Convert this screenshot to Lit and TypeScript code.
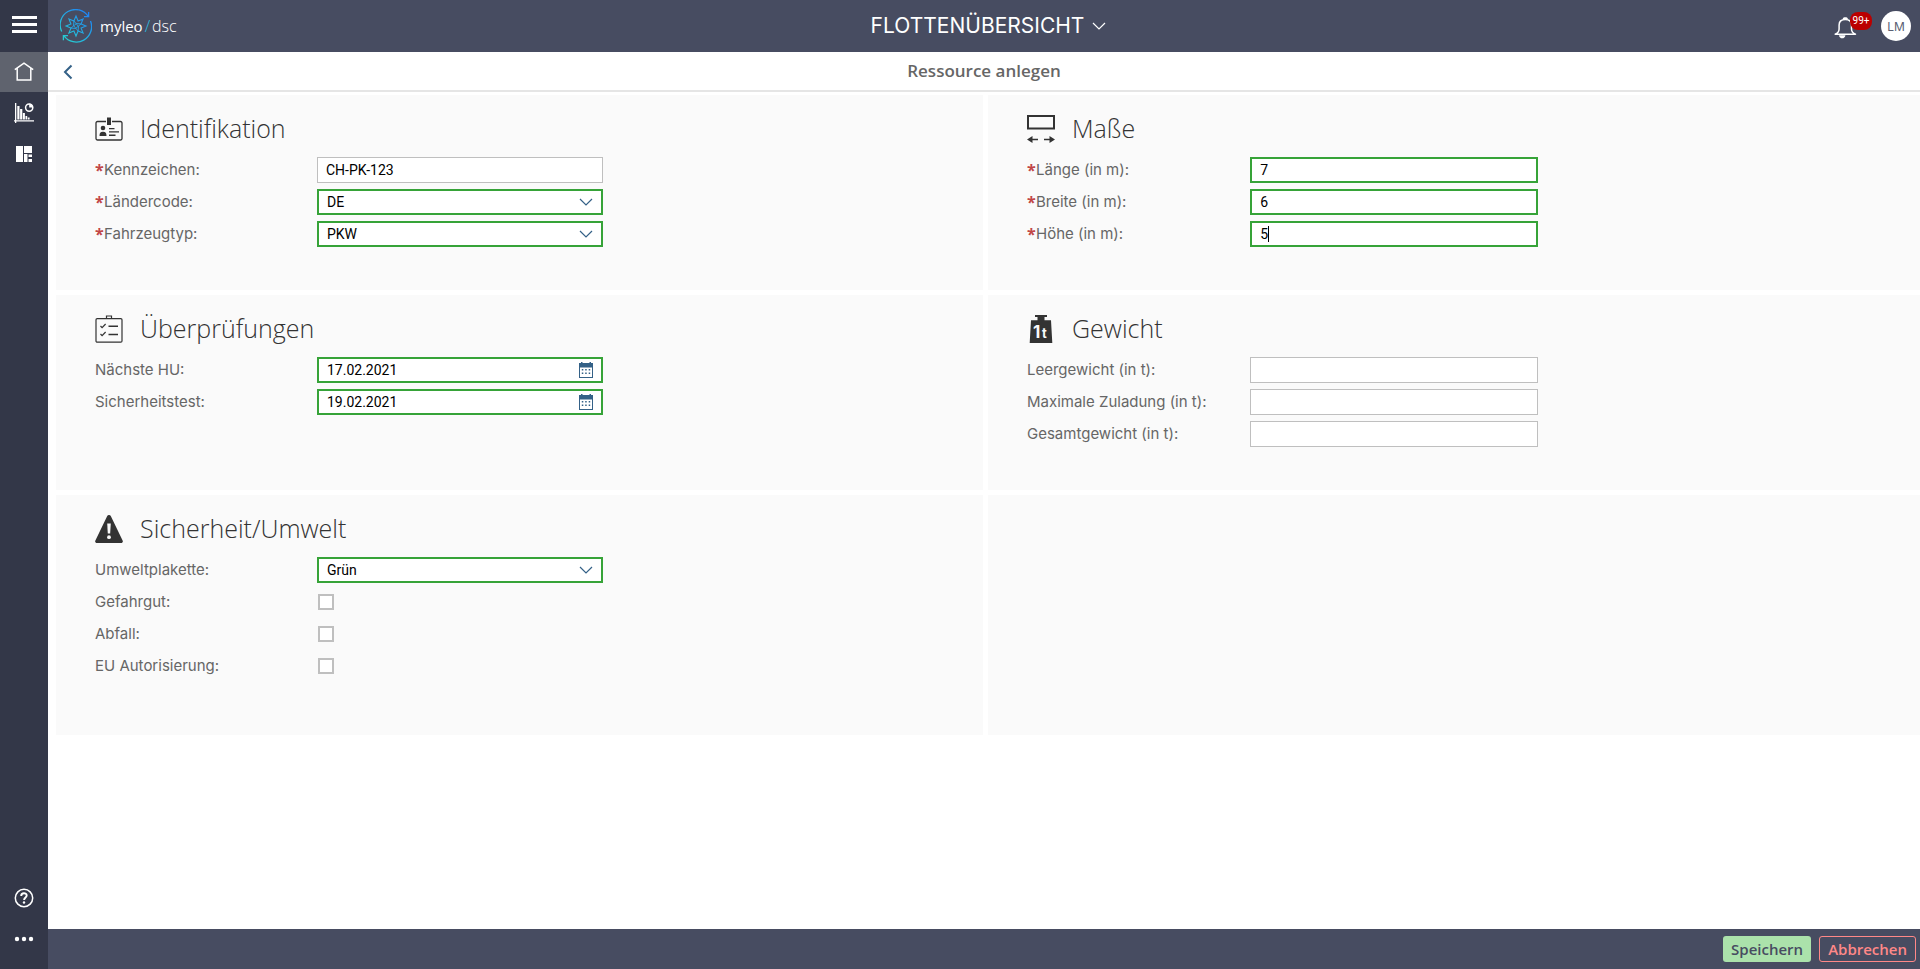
import { LitElement, html, svg, css, nothing, TemplateResult } from "lit";
import { customElement } from "lit/decorators.js";
import { classMap } from "lit/directives/class-map.js";

type Kind = "text" | "select" | "date" | "check";

interface Field {
  id: string;
  label: string;
  kind: Kind;
  value?: string;
  options?: string[];
  required?: boolean;
  valid?: boolean;
  editing?: boolean;
}

interface Section {
  title: string;
  icon: TemplateResult;
  fields: Field[];
}

const icons = {
  home: html`<svg width="20" height="20" viewBox="0 0 20 20" fill="none" stroke="currentColor" stroke-width="1.5">
    <path d="M.8 7.600 10 1.200l9.200 6.400M3.200 6.200v11.900h13.600V6.200" /></svg>`,
  analytics: html`<svg width="20" height="20" viewBox="0 0 20 20" fill="currentColor">
    <path d="M1 0h1.300v17.200H20v1.300H2.300V20H1v-1.500H0v-1.300h1zM3.300 3h2.200v13.400H3.300zM6.100 6h2.200v10.400H6.100zM8.900 10h2v6.400h-2zM11.500 13h1.700v3.400h-1.700zM13.800 14.600h1.800v1.800h-1.800z" />
    <circle cx="15.200" cy="4.600" r="3.600" fill="none" stroke="currentColor" stroke-width="1.500" />
    <path d="M15.200 4.600V.8a3.800 3.800 0 0 1 3.800 3.800z" /></svg>`,
  board: html`<svg width="18" height="18" viewBox="0 0 18 18" fill="currentColor">
    <path d="M1 1h7v16H1zM9 1h8v7H9zM9 9h3.500v8H9zM13.500 9.500H17V12h-3.500zM13.500 14H17v3h-3.500z" /></svg>`,
  help: html`<svg width="20" height="20" viewBox="0 0 20 20" fill="none" stroke="currentColor">
    <circle cx="10" cy="10" r="8.700" stroke-width="1.500" />
    <path d="M7.200 8c0-3.600 5.500-3.500 5.500-.4 0 1.900-2.600 1.900-2.600 4.400" stroke-width="1.900" />
    <circle cx="10" cy="14.500" r="1.200" fill="currentColor" stroke="none" /></svg>`,
  more: html`<svg width="20" height="6" viewBox="0 0 20 6" fill="currentColor">
    <circle cx="3" cy="3" r="2.200" /><circle cx="10" cy="3" r="2.200" /><circle cx="17" cy="3" r="2.200" /></svg>`,
  bell: html`<svg width="23" height="24" viewBox="0 0 23 24" fill="none" stroke="currentColor" stroke-width="1.500">
    <path d="M1.200 18.300c2.800-1.300 3.900-2.800 3.900-5.300V9c0-3.600 2.600-5.600 6.200-5.600s6.200 2 6.200 5.600v4c0 2.500 1.200 4 4 5.300z" stroke-linejoin="round" />
    <path d="M8.800 2.600C9 .7 13.600.7 13.800 2.600v.8h-5zM5 19.200c.4 4.200 6 4.200 6.400 0z" fill="currentColor" stroke="none" /></svg>`,
  back: html`<svg width="10" height="16" viewBox="0 0 10 16" fill="none" stroke="currentColor" stroke-width="2">
    <path d="M8.500 1.500 2 8l6.500 6.500" /></svg>`,
  chevron: html`<svg width="14" height="8" viewBox="0 0 14 8" fill="none" stroke="currentColor" stroke-width="1.200">
    <path d="m1 1 6 6 6-6" /></svg>`,
  calendar: html`<svg width="14" height="16" viewBox="0 0 14 16" fill="currentColor">
    <path d="M0 1h2V0h1.500v1h7V0H12v1h2v15H0zm1 4.500V15h12V5.500z" fill-rule="evenodd" />
    <path d="M2.800 7h1.500v1.500H2.800zM6.200 7h1.500v1.500H6.200zM9.700 7h1.500v1.500H9.700zM2.800 10.500h1.500V12H2.800zM6.200 10.500h1.500V12H6.200zM9.700 10.500h1.500V12H9.700z" /></svg>`,
  badge: html`<svg width="28" height="28" viewBox="0 0 28 28" fill="#333">
    <path d="M11 6.500H2.500a1.500 1.500 0 0 0-1.500 1.500v15.500A1.500 1.500 0 0 0 2.500 25h23a1.500 1.500 0 0 0 1.500-1.500V8a1.500 1.500 0 0 0-1.500-1.500H17" fill="none" stroke="#333" stroke-width="1.300" />
    <rect x="12" y="2.500" width="4" height="7.500" />
    <circle cx="8" cy="13" r="2.300" />
    <path d="M4.500 21c0-3 .8-4.300 3.500-4.300s3.500 1.300 3.500 4.300zM14 13h5.500v1.300H14zM14 16.300h10v1.300H14zM14 19.600h6.500v1.300H14z" /></svg>`,
  size: html`<svg width="28" height="28" viewBox="0 0 28 28" fill="#333">
    <rect x="1" y="1" width="26" height="12.500" fill="none" stroke="#333" stroke-width="2" />
    <path d="m0 24.500 5.500-3.500v2.800H11v1.400H5.500V28zM28 24.500 22.500 21v2.800H17v1.400h5.500V28z" /></svg>`,
  checklist: html`<svg width="28" height="28" viewBox="0 0 28 28" fill="none" stroke="#333" stroke-width="1.200">
    <rect x="1" y="3.600" width="26" height="23.600" rx="1.200" />
    <path d="M11.500 3.400V1h5v2.400M5.500 11l1.600 1.700L10.600 9M5.500 19l1.600 1.700 3.500-3.700" />
    <path d="M13.500 11.300H23M13.500 19.500H23" stroke-width="1.500" /></svg>`,
  weight: html`<svg width="28" height="28" viewBox="0 0 28 28" fill="#333">
    <path d="M8 0h12v2h-2.500v3.300H24L25.300 28H2.700L4 5.300h6.500V2H8z" />
    <text class="weight-mark" x="6" y="23" font-size="17">1</text>
    <text class="weight-mark" x="15" y="23" font-size="13">t</text></svg>`,
  warning: html`<svg width="28" height="28" viewBox="0 0 28 28" fill="#333">
    <path d="M12.100 1.300a2.100 2.100 0 0 1 3.800 0l11.700 24.200c.7 1.400-.1 2.500-1.600 2.500H2C.5 28-.3 26.900.4 25.500z" />
    <path d="M12.200 8.500h3.600l-.6 10h-2.400z" fill="#fafafa" /><circle cx="14" cy="22.200" r="1.900" fill="#fafafa" /></svg>`,
};

/** Corner list of an eight-pointed star around the logo's centre. */
const starPoints = Array.from({ length: 16 }, (_, i) => {
  const r = i % 2 ? 5.5 : 10;
  const a = (i * Math.PI) / 8;
  return `${(16 + r * Math.sin(a)).toFixed(2)},${(17 - r * Math.cos(a)).toFixed(2)}`;
}).join(" ");

const logo = html`<svg width="32" height="34" viewBox="0 0 32 34" fill="none" stroke="url(#brand)" stroke-width="1.300">
  <defs><linearGradient id="brand" gradientUnits="userSpaceOnUse" x1="4" y1="30" x2="28" y2="4">
    <stop offset="0" stop-color="#27cfd0" /><stop offset="1" stop-color="#1f83f5" /></linearGradient></defs>
  <path d="M1.700 22.500A15.300 15.300 0 0 1 28.300 7.500M30.500 12A15.300 15.300 0 0 1 4 26.800M28.600 3v4.700H24M3.400 31.300v-4.600H8" />
  <polygon points=${starPoints} stroke-width="1.100" />
  ${[0, 90, 180, 270].map((a) => svg`<path transform="rotate(${a} 16 17)" d="M13.900 11.900 16 14.500l5.100.4M16 14.500 18.100 17" stroke-width=".9" />`)}
</svg>`;

const sections: Section[] = [
  {
    title: "Identifikation",
    icon: icons.badge,
    fields: [
      { id: "plate", label: "Kennzeichen:", kind: "text", value: "CH-PK-123", required: true },
      { id: "country", label: "Ländercode:", kind: "select", options: ["DE", "AT", "CH"], required: true, valid: true },
      { id: "type", label: "Fahrzeugtyp:", kind: "select", options: ["PKW", "LKW"], required: true, valid: true },
    ],
  },
  {
    title: "Maße",
    icon: icons.size,
    fields: [
      { id: "length", label: "Länge (in m):", kind: "text", value: "7", required: true, valid: true },
      { id: "width", label: "Breite (in m):", kind: "text", value: "6", required: true, valid: true },
      { id: "height", label: "Höhe (in m):", kind: "text", value: "5", required: true, valid: true, editing: true },
    ],
  },
  {
    title: "Überprüfungen",
    icon: icons.checklist,
    fields: [
      { id: "inspection", label: "Nächste HU:", kind: "date", value: "17.02.2021", valid: true },
      { id: "safety", label: "Sicherheitstest:", kind: "date", value: "19.02.2021", valid: true },
    ],
  },
  {
    title: "Gewicht",
    icon: icons.weight,
    fields: [
      { id: "empty", label: "Leergewicht (in t):", kind: "text" },
      { id: "payload", label: "Maximale Zuladung (in t):", kind: "text" },
      { id: "total", label: "Gesamtgewicht (in t):", kind: "text" },
    ],
  },
  {
    title: "Sicherheit/Umwelt",
    icon: icons.warning,
    fields: [
      { id: "sticker", label: "Umweltplakette:", kind: "select", options: ["Grün", "Gelb", "Rot"], valid: true },
      { id: "hazard", label: "Gefahrgut:", kind: "check" },
      { id: "waste", label: "Abfall:", kind: "check" },
      { id: "eu", label: "EU Autorisierung:", kind: "check" },
    ],
  },
];

@customElement("form-section")
export class FormSection extends LitElement {
  static properties = { section: { attribute: false } };
  declare section: Section;

  static styles = css`
    :host { display: block; background: #fafafa; padding: 20px 0 43px 39px; }
    .head { display: flex; align-items: center; gap: 17px; height: 28px; margin-bottom: 14px; }
    .head svg { flex: none; }
    .title { margin: 0; font: 300 25px/26px "Open Sans", sans-serif; color: #333; height: 28px; }
    .rows { display: grid; gap: 6px; }
    .row { display: grid; grid-template-columns: 25% 1fr; align-items: center; height: 26px; }
    .label { font: 15px/26px Inter, sans-serif; color: #666; white-space: nowrap; display: flex; }
    .star { color: #c14646; font: 700 16px/26px "Open Sans", sans-serif; width: 9px; flex: none; }
    .control { position: relative; width: 43%; height: 26px; }
    .box {
      box-sizing: border-box; display: block; width: 100%; height: 26px; margin: 0;
      padding: 0 8px; border: 1px solid #bfbfbf; border-radius: 0; background: #fff;
      color: #000; font: 14px/22px Roboto, sans-serif; outline: none; appearance: none;
    }
    .box.valid { border: 2px solid #36a338; }
    .suffix { position: absolute; right: 10px; top: 0; height: 26px; display: flex; align-items: center; color: #346187; pointer-events: none; }
    button.suffix { padding: 0; border: 0; background: none; pointer-events: auto; }
    .caret { position: absolute; left: 18px; top: 5px; width: 1px; height: 16px; background: #000; }
    .check { appearance: none; display: block; box-sizing: border-box; width: 16px; height: 16px; margin: 5px 1px; border: 2px solid #bfbfbf; background: #fff; }
    .weight-mark { font-family: Inter, sans-serif; font-weight: 700; fill: #fafafa; }
  `;

  private control(f: Field) {
    const cls = classMap({ box: true, valid: !!f.valid });
    switch (f.kind) {
      case "select":
        return html`<select id=${f.id} class=${cls}>${f.options!.map((o) => html`<option>${o}</option>`)}</select>
          <span class="suffix">${icons.chevron}</span>`;
      case "date":
        return html`<input id=${f.id} class=${cls} type="text" .value=${f.value ?? ""} />
          <button class="suffix" type="button" aria-label="Kalender">${icons.calendar}</button>`;
      case "check":
        return html`<input id=${f.id} class="check" type="checkbox" />`;
      default:
        return html`<input id=${f.id} class=${cls} type="text" .value=${f.value ?? ""} />
          ${f.editing ? html`<span class="caret"></span>` : nothing}`;
    }
  }

  render() {
    const s = this.section;
    if (!s) return nothing;
    return html`
      <div class="head">${s.icon}<h2 class="title">${s.title}</h2></div>
      <div class="rows">
        ${s.fields.map((f) => html`
          <div class="row">
            <label class="label" for=${f.id}>${f.required ? html`<span class="star">*</span>` : nothing}${f.label}</label>
            <div class="control">${this.control(f)}</div>
          </div>`)}
      </div>`;
  }
}

@customElement("app-root")
export class AppRoot extends LitElement {
  static styles = css`
    :host { display: grid; grid-template-columns: 48px 1fr; min-height: 100vh; background: #fff; font-family: Inter, sans-serif; }
    button { font: inherit; margin: 0; padding: 0; border: 0; background: none; color: inherit; display: flex; align-items: center; justify-content: center; cursor: pointer; }
    .side { background: #333748; color: #fff; display: flex; flex-direction: column; }
    .side button { height: 40px; width: 100%; }
    .side .menu { height: 52px; padding-bottom: 3px; }
    .side .current { background: #5f636e; }
    .side .spaced { margin-top: 1px; }
    .bars { width: 25px; height: 17px; box-sizing: border-box; border: solid #fff; border-width: 3px 0; display: flex; align-items: center; }
    .bars::before { content: ""; width: 100%; height: 3px; background: #fff; }
    .bottom { margin-top: auto; padding-bottom: 10px; }
    .main { display: flex; flex-direction: column; min-width: 0; }
    .top { display: grid; grid-template-columns: 1fr auto 1fr; align-items: center; height: 52px; background: #474c61; color: #fff; padding: 0 9px 0 12px; }
    .brand { display: flex; align-items: center; color: #fff; text-decoration: none; font: 300 16px/20px "Open Sans", sans-serif; }
    .brand-name { font-weight: 500; font-size: 15px; margin-left: 8px; }
    .slash { color: #27bfe0; margin: 0 2px; }
    .page { font-size: 21px; line-height: 24px; gap: 8px; padding-left: 6px; padding-bottom: 1px; }
    .tools { display: flex; justify-content: flex-end; align-items: center; gap: 24px; }
    .bell { position: relative; padding-top: 4px; }
    .count { position: absolute; left: 16px; top: 0; width: 22px; height: 18px; border-radius: 8px; background: #b00; font: 10px/18px Roboto, sans-serif; text-align: center; }
    .avatar { width: 30px; height: 30px; border-radius: 50%; background: #fff; color: #5a5f73; font-size: 12px; }
    .sub { display: grid; grid-template-columns: 40px 1fr 40px; align-items: center; height: 38px; border-bottom: 2px solid #e5e5e5; }
    .back { color: #346187; height: 38px; padding-top: 1px; }
    .heading { margin: 0; text-align: center; font: 600 17px/24px "Open Sans", sans-serif; color: #666; }
    .grid { display: grid; grid-template-columns: calc(50% - 5px) 50%; grid-template-rows: auto auto minmax(240px, auto); gap: 5px; padding: 3px 0 0 8px; }
    .blank { background: #fafafa; }
    .foot { margin-top: auto; display: flex; justify-content: flex-end; align-items: center; gap: 8px; height: 40px; padding: 0 4px; background: #474c61; }
    .foot button { box-sizing: border-box; height: 26px; padding: 0 8px; border-radius: 3px; font: 600 15px/24px "Open Sans", sans-serif; }
    .save { background: #abe2ab; color: #474c61; }
    .cancel { border: 1px solid #ff8888; color: #ff8888; }
  `;

  render() {
    return html`
      <nav class="side">
        <button class="menu" aria-label="Menü"><span class="bars"></span></button>
        <button class="current" aria-label="Start">${icons.home}</button>
        <button class="spaced" aria-label="Auswertung">${icons.analytics}</button>
        <button class="spaced" aria-label="Dashboard">${icons.board}</button>
        <div class="bottom">
          <button aria-label="Hilfe">${icons.help}</button>
          <button class="spaced" aria-label="Mehr">${icons.more}</button>
        </div>
      </nav>
      <div class="main">
        <header class="top">
          <a class="brand" href="#">${logo}<span class="brand-name">myleo</span><span class="slash">/</span><span>dsc</span></a>
          <button class="page">FLOTTENÜBERSICHT ${icons.chevron}</button>
          <div class="tools">
            <button class="bell" aria-label="Benachrichtigungen">${icons.bell}<span class="count">99+</span></button>
            <button class="avatar">LM</button>
          </div>
        </header>
        <div class="sub">
          <button class="back" aria-label="Zurück">${icons.back}</button>
          <h1 class="heading">Ressource anlegen</h1>
        </div>
        <main class="grid">
          ${sections.map((s) => html`<form-section .section=${s}></form-section>`)}
          <div class="blank"></div>
        </main>
        <footer class="foot">
          <button class="save">Speichern</button>
          <button class="cancel">Abbrechen</button>
        </footer>
      </div>`;
  }
}
